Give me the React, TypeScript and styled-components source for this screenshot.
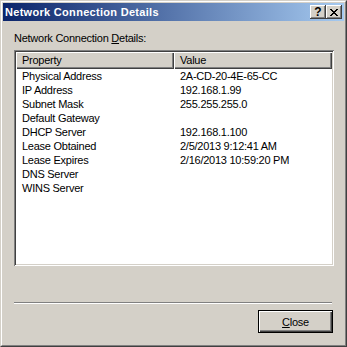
import React from 'react'
import styled, { createGlobalStyle } from 'styled-components'

const GlobalStyle = createGlobalStyle`
  html, body {
    margin: 0;
    padding: 0;
    background: #d4d0c8;
  }
  body {
    font-family: 'Liberation Sans', Arial, sans-serif;
    font-size: 11px;
    letter-spacing: -0.25px;
  }
`

const rows = [
  { property: 'Physical Address', value: '2A-CD-20-4E-65-CC' },
  { property: 'IP Address', value: '192.168.1.99' },
  { property: 'Subnet Mask', value: '255.255.255.0' },
  { property: 'Default Gateway', value: '' },
  { property: 'DHCP Server', value: '192.168.1.100' },
  { property: 'Lease Obtained', value: '2/5/2013 9:12:41 AM' },
  { property: 'Lease Expires', value: '2/16/2013 10:59:20 PM' },
  { property: 'DNS Server', value: '' },
  { property: 'WINS Server', value: '' },
]

export default function App() {
  return (
    <>
      <GlobalStyle />
      <Window>
        <WindowInner>
          <TitleBar>
            <TitleText>Network Connection Details</TitleText>
            <TitleButtons>
              <CaptionButton>
                <HelpGlyph>?</HelpGlyph>
              </CaptionButton>
              <CaptionButton>
                <svg width="8" height="7" viewBox="0 0 8 7" shapeRendering="crispEdges">
                  <path
                    d="M0 0h2v1h-2zM6 0h2v1h-2zM1 1h2v1h-2zM5 1h2v1h-2zM2 2h4v1h-4zM3 3h2v1h-2zM2 4h4v1h-4zM1 5h2v1h-2zM5 5h2v1h-2zM0 6h2v1h-2zM6 6h2v1h-2z"
                    fill="#000"
                  />
                </svg>
              </CaptionButton>
            </TitleButtons>
          </TitleBar>
          <Body>
            <Label>
              Network Connection <u>D</u>etails:
            </Label>
            <ListView>
              <HeaderRow>
                <HeaderCell>Property</HeaderCell>
                <HeaderCell>Value</HeaderCell>
              </HeaderRow>
              {rows.map((row) => (
                <Row key={row.property}>
                  <Cell>{row.property}</Cell>
                  <Cell>{row.value}</Cell>
                </Row>
              ))}
            </ListView>
            <Separator />
            <Footer>
              <DefaultButton>
                <u>C</u>lose
              </DefaultButton>
            </Footer>
          </Body>
        </WindowInner>
      </Window>
    </>
  )
}

const Window = styled.div`
  width: 347px;
  height: 347px;
  box-sizing: border-box;
  border: 1px solid;
  border-color: #d4d0c8 #404040 #404040 #d4d0c8;
`

const WindowInner = styled.div`
  height: 100%;
  box-sizing: border-box;
  border: 1px solid;
  border-color: #ffffff #808080 #808080 #ffffff;
  padding: 1px;
  display: flex;
  flex-direction: column;
`

const TitleBar = styled.div`
  height: 18px;
  flex-shrink: 0;
  display: flex;
  align-items: center;
  justify-content: space-between;
  padding: 0 2px;
  background: linear-gradient(to right, #0a246a, #a6caf0);
`

const TitleText = styled.span`
  color: #ffffff;
  font-weight: bold;
  font-size: 11px;
  line-height: 13px;
  letter-spacing: 0.3px;
`

const TitleButtons = styled.div`
  display: flex;
`

const CaptionButton = styled.div`
  width: 16px;
  height: 14px;
  box-sizing: border-box;
  background: #d4d0c8;
  display: flex;
  align-items: center;
  justify-content: center;
  box-shadow: inset -1px -1px 0 #404040, inset 1px 1px 0 #ffffff,
    inset -2px -2px 0 #808080, inset 2px 2px 0 #d4d0c8;
`

const HelpGlyph = styled.span`
  font-weight: bold;
  font-size: 12px;
  line-height: 12px;
  letter-spacing: 0;
  color: #000;
`

const Body = styled.div`
  flex: 1;
  display: flex;
  flex-direction: column;
  padding: 11px 11px 0 11px;
`

const Label = styled.div`
  color: #000;
  line-height: 13px;
  margin-bottom: 5px;
`

const ListView = styled.div`
  width: 320px;
  height: 216px;
  box-sizing: border-box;
  background: #ffffff;
  box-shadow: inset 1px 1px 0 #808080, inset -1px -1px 0 #ffffff,
    inset 2px 2px 0 #404040, inset -2px -2px 0 #d4d0c8;
  padding: 2px;
`

const HeaderRow = styled.div`
  display: grid;
  grid-template-columns: 158px 158px;
  height: 17px;
`

const HeaderCell = styled.div`
  background: #d4d0c8;
  box-shadow: inset 1px 1px 0 #ffffff, inset -1px -1px 0 #404040,
    inset -2px -2px 0 #808080;
  padding-left: 6px;
  line-height: 16px;
  color: #000;
`

const Row = styled.div`
  display: grid;
  grid-template-columns: 158px 158px;
  height: 14px;
`

const Cell = styled.div`
  padding-left: 6px;
  line-height: 14px;
  color: #000;
  white-space: nowrap;
`

const Separator = styled.div`
  width: 318px;
  height: 0;
  margin-top: 36px;
  border-top: 1px solid #808080;
  border-bottom: 1px solid #ffffff;
`

const Footer = styled.div`
  display: flex;
  justify-content: flex-end;
  width: 319px;
  margin-top: 6px;
`

const DefaultButton = styled.div`
  width: 75px;
  height: 23px;
  box-sizing: border-box;
  border: 1px solid #000;
  background: #d4d0c8;
  box-shadow: inset 1px 1px 0 #ffffff, inset -1px -1px 0 #404040,
    inset -2px -2px 0 #808080;
  display: flex;
  align-items: center;
  justify-content: center;
  color: #000;
`
